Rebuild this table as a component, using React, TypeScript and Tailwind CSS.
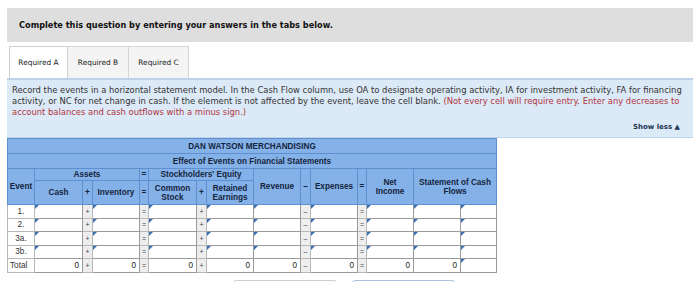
import React from 'react';

const verdana = { fontFamily: '"DejaVu Sans", Verdana, sans-serif' };
const arial = { fontFamily: '"Liberation Sans", Arial, sans-serif' };

type Op = '+' | '=' | '–';

function Marker() {
  return (
    <span className="absolute left-0 top-0 h-0 w-0 border-l-[4px] border-b-[4px] border-l-[#3b6fb5] border-b-transparent" />
  );
}

function InputCell({ value, marker = true }: { value?: string; marker?: boolean }) {
  return (
    <td className="relative border border-[#9a9a9a] bg-white px-[3px] text-right text-[#222]">
      {marker && <Marker />}
      {value}
    </td>
  );
}

function OpCell({ op }: { op: Op }) {
  return (
    <td className="border border-[#b8b8b8] bg-[#eeeeee] text-center text-[7px] text-[#444]">{op}</td>
  );
}

const rows = ['1.', '2.', '3a.', '3b.'];

export default function App() {
  const head = 'border border-[#5f8fcf] bg-[#84b2e8] text-center font-bold text-[#15243d]';

  return (
    <div className="h-[282px] w-[700px] overflow-hidden bg-white px-[7px] pt-[8px]">
      <div className="flex h-[34px] items-center bg-[#dedede] px-[12px]" style={verdana}>
        <span className="text-[8.2px] font-bold text-[#111]">Complete this question by entering your answers in the tabs below.</span>
      </div>

      <div className="mt-[4px] flex pl-[2px] text-[7.4px] text-[#222]" style={verdana}>
        <div className="flex h-[32px] w-[59px] items-center justify-center border border-b-0 border-[#cfcfcf] bg-white">Required A</div>
        <div className="flex h-[32px] w-[61px] items-center justify-center border border-l-0 border-b-0 border-[#d6d6d6] bg-[#f4f4f4]">Required B</div>
        <div className="flex h-[32px] w-[60px] items-center justify-center border border-l-0 border-b-0 border-[#d6d6d6] bg-[#f4f4f4]">Required C</div>
      </div>

      <div className="h-[60px] border-t-2 border-b border-[#bcd2ea] bg-[#dce9f6] px-[5px] pt-[5px]" style={verdana}>
        <p className="text-[8.4px] leading-[11px] text-[#333]">
          Record the events in a horizontal statement model. In the Cash Flow column, use OA to designate operating activity, IA for investment activity, FA for financing activity, or NC for net change in cash. If the element is not affected by the event, leave the cell blank.{' '}
          <span className="text-[#b0343f]">(Not every cell will require entry. Enter any decreases to account balances and cash outflows with a minus sign.)</span>
        </p>
        <div className="mt-[4px] pr-[8px] text-right text-[7px] font-bold text-[#1d3557]">Show less ▲</div>
      </div>

      <table className="table-fixed border-collapse text-[8.2px] leading-[9px]" style={arial}>
        <colgroup>
          {[27, 48, 10, 47, 9, 48, 10, 47, 47, 10, 47, 9, 47, 47, 36].map((w, i) => (
            <col key={i} style={{ width: w }} />
          ))}
        </colgroup>
        <thead>
          <tr className="h-[15px]">
            <th colSpan={15} className={head}>DAN WATSON MERCHANDISING</th>
          </tr>
          <tr className="h-[15px]">
            <th colSpan={15} className={head}>Effect of Events on Financial Statements</th>
          </tr>
          <tr className="h-[12px]">
            <th rowSpan={2} className={head}>Event</th>
            <th colSpan={3} className={head}>Assets</th>
            <th className={head}>=</th>
            <th colSpan={3} className={head}>Stockholders' Equity</th>
            <th rowSpan={2} className={head}>Revenue</th>
            <th rowSpan={2} className={head}>–</th>
            <th rowSpan={2} className={head}>Expenses</th>
            <th rowSpan={2} className={head}>=</th>
            <th rowSpan={2} className={head}>Net<br />Income</th>
            <th rowSpan={2} colSpan={2} className={head}>Statement of Cash<br />Flows</th>
          </tr>
          <tr className="h-[24px]">
            <th className={head}>Cash</th>
            <th className={head}>+</th>
            <th className={head}>Inventory</th>
            <th className={head}>=</th>
            <th className={head}>Common<br />Stock</th>
            <th className={head}>+</th>
            <th className={head}>Retained<br />Earnings</th>
          </tr>
        </thead>
        <tbody>
          {rows.map(r => (
            <tr key={r} className="h-[13.5px]">
              <td className="border border-[#b8b8b8] bg-white text-center text-[#333]">{r}</td>
              <InputCell />
              <OpCell op="+" />
              <InputCell />
              <OpCell op="=" />
              <InputCell />
              <OpCell op="+" />
              <InputCell />
              <InputCell />
              <OpCell op="–" />
              <InputCell />
              <OpCell op="=" />
              <InputCell />
              <InputCell />
              <InputCell />
            </tr>
          ))}
          <tr className="h-[14px]">
            <td className="border border-[#b8b8b8] bg-white px-[2px] text-left text-[#333]">Total</td>
            <InputCell value="0" marker={false} />
            <OpCell op="+" />
            <InputCell value="0" marker={false} />
            <OpCell op="=" />
            <InputCell value="0" marker={false} />
            <OpCell op="+" />
            <InputCell value="0" marker={false} />
            <InputCell value="0" marker={false} />
            <OpCell op="–" />
            <InputCell value="0" marker={false} />
            <OpCell op="=" />
            <InputCell value="0" marker={false} />
            <InputCell value="0" marker={false} />
            <InputCell />
          </tr>
        </tbody>
      </table>

      <div className="mt-[7px] flex gap-[15px] pl-[226px]">
        <div className="h-[20px] w-[104px] rounded-[3px] border border-[#cfcfcf] bg-white" />
        <div className="h-[20px] w-[103px] rounded-[3px] border border-[#a9c2e0] bg-white" />
      </div>
    </div>
  );
}
